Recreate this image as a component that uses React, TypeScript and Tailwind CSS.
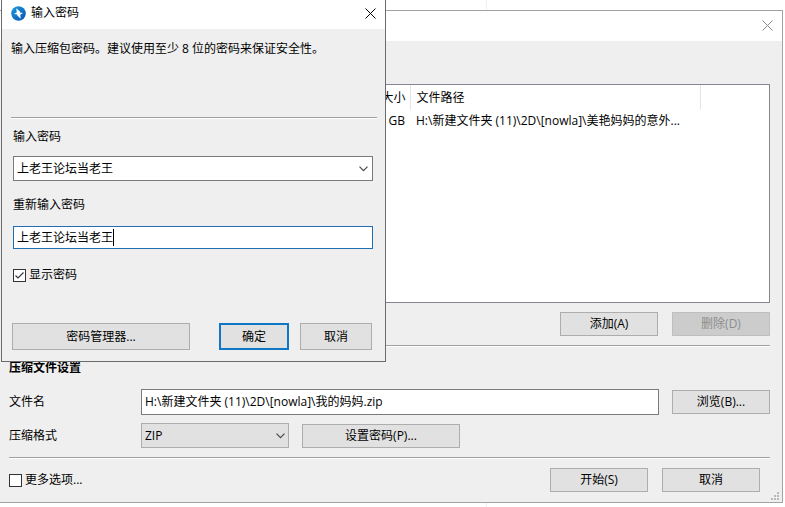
import { useState } from "react";
import { clsx } from "clsx";

interface PushButtonProps {
  className?: string;
  disabled?: boolean;
  primary?: boolean;
  children: React.ReactNode;
}

function PushButton({ className, disabled, primary, children }: PushButtonProps) {
  return (
    <button
      type="button"
      disabled={disabled}
      className={clsx(
        "flex shrink-0 items-center justify-center leading-4",
        primary ? "border-2 border-[#1076c6]" : "border",
        !primary && (disabled ? "border-[#bfbfbf]" : "border-[#adadad]"),
        disabled ? "bg-[#cccccc] text-[#8c8c8c]" : "bg-[#e1e1e1] text-black",
        className,
      )}
    >
      {children}
    </button>
  );
}

function CloseIcon() {
  return (
    <svg width="11" height="11" viewBox="0 0 11 11" fill="none" stroke="currentColor" aria-hidden="true">
      <path d="M0.5 0.5L10.5 10.5M10.5 0.5L0.5 10.5" strokeWidth="1" />
    </svg>
  );
}

function ChevronIcon() {
  return (
    <svg width="9" height="6" viewBox="0 0 9 6" fill="none" stroke="#4a4a4a" aria-hidden="true">
      <path d="M0.5 0.7L4.5 4.7L8.5 0.7" strokeWidth="1.2" />
    </svg>
  );
}

function AppIcon() {
  return (
    <svg width="15" height="15" viewBox="0 0 15 15" aria-hidden="true">
      <defs>
        <linearGradient id="app-icon-fill" x1="0" y1="0" x2="1" y2="1">
          <stop offset="0" stopColor="#1c9be0" />
          <stop offset="1" stopColor="#0a52b0" />
        </linearGradient>
      </defs>
      <circle cx="7.5" cy="7.5" r="7.3" fill="url(#app-icon-fill)" />
      <path d="M5.2 2.2L9 5.4L8.8 6.6L12 7L9.2 8.8L9.8 12.8L6.2 9.6L6.4 8.4L3 8L5.8 6.2Z" fill="#fff" />
    </svg>
  );
}

function ResizeGrip() {
  return (
    <svg width="8" height="8" viewBox="0 0 8 8" fill="#b9b9b9" aria-hidden="true">
      <rect x="6" y="0" width="2" height="2" />
      <rect x="3" y="3" width="2" height="2" />
      <rect x="6" y="3" width="2" height="2" />
      <rect x="0" y="6" width="2" height="2" />
      <rect x="3" y="6" width="2" height="2" />
      <rect x="6" y="6" width="2" height="2" />
    </svg>
  );
}

function Separator() {
  return <hr className="h-[2px] border-t border-b border-t-[#a0a0a0] border-b-white" />;
}

interface CheckBoxProps {
  label: string;
  initial?: boolean;
}

function CheckBox({ label, initial = false }: CheckBoxProps) {
  const [checked, setChecked] = useState(initial);

  return (
    <label className="flex items-center gap-[3px] leading-4">
      <span className="relative flex">
        <input
          type="checkbox"
          checked={checked}
          onChange={(e) => setChecked(e.target.checked)}
          className="size-[13px] appearance-none border border-[#333333] bg-white"
        />
        {checked && (
          <svg
            className="pointer-events-none absolute inset-0"
            width="13"
            height="13"
            viewBox="0 0 13 13"
            fill="none"
            stroke="#333333"
            aria-hidden="true"
          >
            <path d="M2.5 6.5L5 9L10.5 3.5" strokeWidth="1.1" />
          </svg>
        )}
      </span>
      {label}
    </label>
  );
}

function ArchiveWindow() {
  return (
    <main className="mr-[2px] border-y border-r border-[#a3a3a3] bg-[#efefef]">
      <header className="flex h-[30px] items-center justify-end bg-white pr-[9px] pb-[2px]">
        <button type="button" aria-label="关闭" className="text-[#8a8a8a]">
          <CloseIcon />
        </button>
      </header>

      <div className="relative pt-[43px] pr-3 pb-[10px] pl-[9px]">
        <div className="h-[219px] border border-[#828790] bg-white">
          <table className="w-full table-fixed text-left leading-4">
            <colgroup>
              <col className="w-[400px]" />
              <col className="w-[290px]" />
              <col />
            </colgroup>
            <thead>
              <tr className="h-[25px]">
                <th className="border-r border-[#e5e5e5] pr-1 text-right font-normal">大小</th>
                <th className="border-r border-[#e5e5e5] pl-[6px] font-normal">文件路径</th>
                <th />
              </tr>
            </thead>
            <tbody>
              <tr className="h-[22px]">
                <td className="pr-[5px] text-right">GB</td>
                <td className="truncate pl-[6px]">H:\新建文件夹 (11)\2D\[nowla]\美艳妈妈的意外...</td>
                <td />
              </tr>
            </tbody>
          </table>
        </div>

        <div className="mt-[9px] mb-[9px] flex justify-end gap-[14px]">
          <PushButton className="h-6 w-[98px]">添加(A)</PushButton>
          <PushButton className="h-6 w-[98px]" disabled>
            删除(D)
          </PushButton>
        </div>

        <Separator />

        <h2 className="mt-[13px] leading-4 font-bold">压缩文件设置</h2>

        <div className="mt-[13px] flex items-center">
          <label htmlFor="file-name" className="w-[132px] shrink-0 leading-4">
            文件名
          </label>
          <input
            id="file-name"
            type="text"
            defaultValue="H:\新建文件夹 (11)\2D\[nowla]\我的妈妈.zip"
            className="mr-[13px] h-[26px] min-w-0 flex-1 border border-[#7a7a7a] bg-white pb-[2px] pl-[3px] leading-4 outline-none"
          />
          <PushButton className="h-6 w-[98px]">浏览(B)...</PushButton>
        </div>

        <div className="mt-2 mb-[9px] flex items-center">
          <label htmlFor="format" className="w-[132px] shrink-0 leading-4">
            压缩格式
          </label>
          <div className="relative mr-[13px] flex w-[148px] shrink-0">
            <select
              id="format"
              defaultValue="ZIP"
              className="h-[25px] w-full appearance-none border border-[#adadad] bg-[#e1e1e1] pl-[3px] leading-4 outline-none"
            >
              <option>ZIP</option>
            </select>
            <span className="pointer-events-none absolute inset-y-0 right-1 flex items-center">
              <ChevronIcon />
            </span>
          </div>
          <PushButton className="h-6 w-[158px]">设置密码(P)...</PushButton>
        </div>

        <Separator />

        <div className="mt-[9px] flex items-center gap-[14px] pr-[10px]">
          <div className="flex-1">
            <CheckBox label="更多选项..." />
          </div>
          <PushButton className="h-6 w-[98px]">开始(S)</PushButton>
          <PushButton className="h-6 w-[98px]">取消</PushButton>
        </div>

        <span className="absolute right-[3px] bottom-[2px] flex">
          <ResizeGrip />
        </span>
      </div>
    </main>
  );
}

function PasswordDialog() {
  return (
    <section
      role="dialog"
      aria-labelledby="dialog-title"
      className="absolute top-0 left-px w-[385px] border-x border-b border-[#6b6b6b] bg-[#efefef]"
    >
      <header className="flex h-[29px] items-center bg-white pr-[9px] pb-[3px] pl-[9px]">
        <AppIcon />
        <h1 id="dialog-title" className="ml-[5px] flex-1 leading-4">
          输入密码
        </h1>
        <button type="button" aria-label="关闭">
          <CloseIcon />
        </button>
      </header>

      <div className="pt-3 pr-2 pl-[9px]">
        <p className="mb-[60px] leading-4">输入压缩包密码。建议使用至少 8 位的密码来保证安全性。</p>
        <Separator />
      </div>

      <div className="flex flex-col pt-[10px] pr-3 pl-[11px]">
        <label htmlFor="password" className="leading-4">
          输入密码
        </label>
        <div className="mt-[11px] flex h-[25px] border border-[#7a7a7a] bg-white">
          <input
            id="password"
            type="text"
            defaultValue="上老王论坛当老王"
            className="min-w-0 flex-1 pl-[3px] leading-4 outline-none"
          />
          <button type="button" aria-label="历史密码" className="flex w-[17px] items-center justify-center">
            <ChevronIcon />
          </button>
        </div>

        <label htmlFor="password-again" className="mt-4 leading-4">
          重新输入密码
        </label>
        <div className="relative mt-[13px] flex h-[23px] border border-[#1f6fb0] bg-white">
          <input
            id="password-again"
            type="text"
            defaultValue="上老王论坛当老王"
            className="min-w-0 flex-1 pl-[3px] leading-4 outline-none"
          />
          <span className="absolute top-[2px] left-[99px] h-[17px] w-px bg-black" aria-hidden="true" />
        </div>

        <div className="mt-[18px] flex">
          <CheckBox label="显示密码" initial />
        </div>
      </div>

      <footer className="mt-10 flex justify-between pr-[13px] pb-[11px] pl-[10px]">
        <PushButton className="h-[27px] w-[178px]">密码管理器...</PushButton>
        <div className="flex gap-[11px]">
          <PushButton className="h-[27px] w-[70px]" primary>
            确定
          </PushButton>
          <PushButton className="h-[27px] w-[72px]">取消</PushButton>
        </div>
      </footer>
    </section>
  );
}

export default function App() {
  return (
    <div className="relative bg-white font-['Open_Sans','Noto_Sans_CJK_SC',sans-serif] text-[12px] text-black">
      <div className="h-[10px] w-[487px] border-r border-[#f0f0f0]" />
      <ArchiveWindow />
      <div className="h-1 w-[487px] border-r border-[#f0f0f0]" />
      <PasswordDialog />
    </div>
  );
}
